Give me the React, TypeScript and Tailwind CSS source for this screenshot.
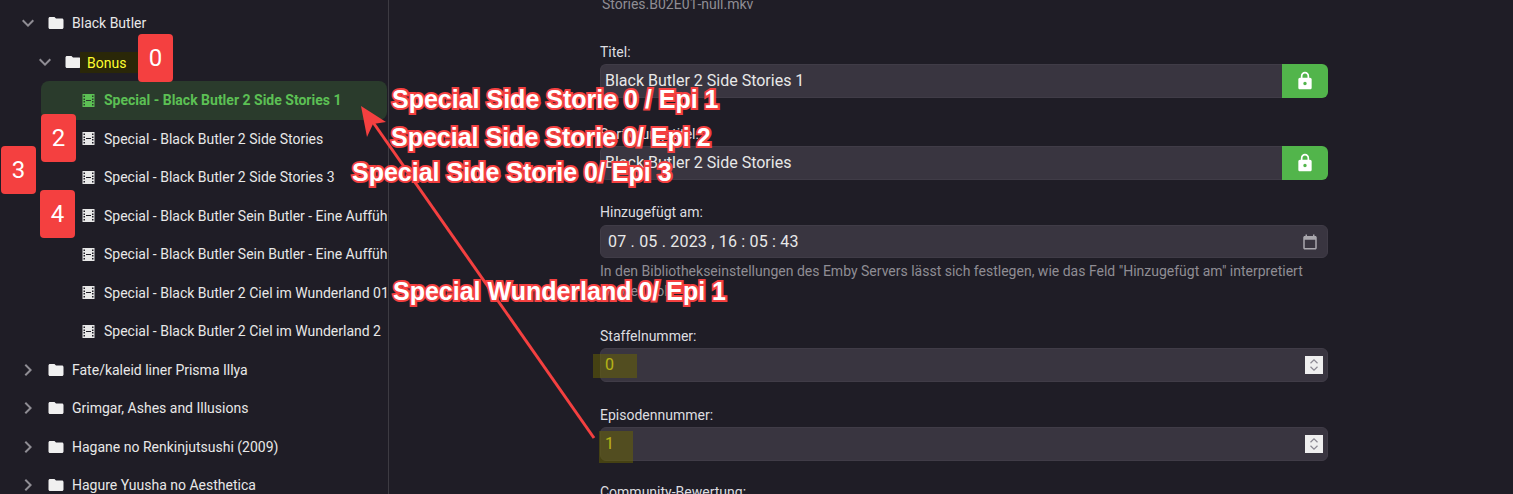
import React from "react";

const FONT = "[font-family:Roboto,'Liberation_Sans',sans-serif]";

function Chevron({ open }: { open: boolean }) {
  return (
    <svg viewBox="0 0 24 24" className="w-6 h-6 shrink-0 text-[#8f8d94]" fill="currentColor">
      {open ? (
        <path d="M7.41 8.59 12 13.17l4.59-4.58L18 10l-6 6-6-6z" />
      ) : (
        <path d="M8.59 16.59 13.17 12 8.59 7.41 10 6l6 6-6 6z" />
      )}
    </svg>
  );
}

function Folder() {
  return (
    <svg viewBox="0 0 24 24" className="w-[18px] h-[18px] shrink-0 text-[#f0f0f0]" fill="currentColor">
      <path d="M10 4H4c-1.1 0-1.99.9-1.99 2L2 18c0 1.1.9 2 2 2h16c1.1 0 2-.9 2-2V8c0-1.1-.9-2-2-2h-8l-2-2z" />
    </svg>
  );
}

function Film() {
  return (
    <svg viewBox="0 0 13 13" className="w-[13px] h-[13px] shrink-0" fill="currentColor">
      <path
        fillRule="evenodd"
        d="M0.5 0H12.5V13H0.5ZM1.5 1.5V3H3V1.5ZM1.5 4.5V6H3V4.5ZM1.5 7V8.5H3V7ZM1.5 10V11.5H3V10ZM10 1.5V3H11.5V1.5ZM10 4.5V6H11.5V4.5ZM10 7V8.5H11.5V7ZM10 10V11.5H11.5V10ZM4 6V7H9V6Z"
      />
    </svg>
  );
}

function Lock() {
  return (
    <svg viewBox="0 0 24 24" className="w-5 h-5" fill="currentColor">
      <path d="M18 8h-1V6c0-2.76-2.24-5-5-5S7 3.240 7 6v2H6c-1.100 0-2 .9-2 2v10c0 1.100.9 2 2 2h12c1.100 0 2-.9 2-2V10c0-1.100-.9-2-2-2zm-6 9c-1.100 0-2-.9-2-2s.9-2 2-2 2 .9 2 2-.9 2-2 2zM9 8V6c0-1.660 1.340-3 3-3s3 1.340 3 3v2H9z" />
    </svg>
  );
}

function FolderRow({ label, open, indent }: { label: string; open: boolean; indent: string }) {
  return (
    <div className={`h-[38.5px] flex items-center whitespace-nowrap ${indent}`}>
      <Chevron open={open} />
      <div className="ml-[7px] mr-[7px] flex items-center">
        <Folder />
      </div>
      <span className="text-sm text-[#e8e8e8]">{label}</span>
    </div>
  );
}

function FileRow({ label, active }: { label: string; active?: boolean }) {
  return (
    <div
      className={`h-[38.5px] ml-[41px] pl-[41px] flex items-center gap-[9px] whitespace-nowrap overflow-hidden rounded-lg ${
        active ? "bg-[#2a3b2c] text-[#5cc054] font-bold" : "text-[#e8e8e8]"
      }`}
    >
      <Film />
      <span className="text-sm">{label}</span>
    </div>
  );
}

function Field({ label, mt, children }: { label: string; mt: string; children: React.ReactNode }) {
  return (
    <div className={mt}>
      <div className="h-5 leading-5 mb-[2px] text-sm text-[#dedde0]">{label}</div>
      {children}
    </div>
  );
}

function LockInput({ value }: { value: string }) {
  return (
    <div className="flex h-[34px]">
      <div className="flex-1 bg-[#393540] border border-[#403c47] border-r-0 rounded-l-md pl-1 flex items-center text-base text-[#e8e8e8]">
        {value}
      </div>
      <div className="w-[46px] bg-[#52b54b] rounded-r-md flex items-center justify-center text-white">
        <Lock />
      </div>
    </div>
  );
}

function NumberInput({ value }: { value: string }) {
  return (
    <div className="h-[34px] bg-[#393540] border border-[#403c47] rounded-md pl-1 pr-1 flex items-center justify-between text-base text-[#ffff2e]">
      <span>{value}</span>
      <div className="w-[18px] h-[18px] bg-[#efefef] flex items-center justify-center">
        <svg viewBox="0 0 18 18" className="w-[18px] h-[18px]" fill="none" stroke="#8b8892" strokeWidth="1.2">
          <path d="M5.500 7.200 9 3.800 12.500 7.200" />
          <path d="M5.500 10.800 9 14.200 12.500 10.800" />
        </svg>
      </div>
    </div>
  );
}

function Square({ n, className }: { n: string; className: string }) {
  return (
    <div
      className={`absolute w-[35px] h-[48px] bg-[#f44040] rounded-sm flex items-center justify-center text-white text-2xl ${className}`}
    >
      {n}
    </div>
  );
}

function Note({ text, className }: { text: string; className: string }) {
  return (
    <div
      className={`absolute whitespace-nowrap font-bold text-white text-[25px] leading-[28px] [font-family:'Liberation_Sans',Arial,sans-serif] [-webkit-text-stroke:4px_#f44040] [paint-order:stroke_fill] ${className}`}
    >
      {text}
    </div>
  );
}

const files = [
  "Special - Black Butler 2 Side Stories",
  "Special - Black Butler 2 Side Stories 3",
  "Special - Black Butler Sein Butler - Eine Aufführung",
  "Special - Black Butler Sein Butler - Eine Aufführung 2",
  "Special - Black Butler 2 Ciel im Wunderland 01",
  "Special - Black Butler 2 Ciel im Wunderland 2",
];

export default function App() {
  return (
    <div className={`relative h-[494px] w-[1513px] overflow-hidden bg-[#1f1d26] flex ${FONT}`}>
      <aside className="w-[389px] shrink-0 h-full overflow-hidden border-r border-[#3d3b42] pt-1 pr-[1px]">
        <FolderRow label="Black Butler" open indent="pl-4" />
        <FolderRow label="Bonus" open indent="pl-[33px]" />
        <FileRow label="Special - Black Butler 2 Side Stories 1" active />
        {files.map((f) => (
          <FileRow key={f} label={f} />
        ))}
        <FolderRow label="Fate/kaleid liner Prisma Illya" open={false} indent="pl-4" />
        <FolderRow label="Grimgar, Ashes and Illusions" open={false} indent="pl-4" />
        <FolderRow label="Hagane no Renkinjutsushi (2009)" open={false} indent="pl-4" />
        <FolderRow label="Hagure Yuusha no Aesthetica" open={false} indent="pl-4" />
      </aside>

      <main className="ml-[211px] w-[728px] shrink-0">
        <div className="-mt-[6px] h-5 leading-5 text-sm text-[#8f8d94] pl-[2px]">Stories.B02E01-null.mkv</div>
        <Field label="Titel:" mt="mt-[28px]">
          <LockInput value="Black Butler 2 Side Stories 1" />
        </Field>
        <Field label="Sortierungstitel:" mt="mt-[26px]">
          <LockInput value="Black Butler 2 Side Stories" />
        </Field>
        <Field label="Hinzugefügt am:" mt="mt-[22px]">
          <div className="mt-[3px] h-[33px] bg-[#393540] border border-[#403c47] rounded-md pl-[7px] pr-2 flex items-center justify-between text-base text-[#e8e8e8]">
            <span className="whitespace-pre tracking-[0.2px]">07 . 05 . 2023 , 16 : 05 : 43</span>
            <svg viewBox="0 0 24 24" className="w-[18px] h-[18px] text-[#a9a7ad]" fill="currentColor">
              <path d="M19 4h-1V2h-2v2H8V2H6v2H5c-1.100 0-2 .9-2 2v14c0 1.100.9 2 2 2h14c1.100 0 2-.9 2-2V6c0-1.100-.9-2-2-2zm0 16H5V9h14v11z" />
            </svg>
          </div>
        </Field>
        <div className="mt-[3px] text-sm leading-[20px] text-[#8f8d94]">
          In den Bibliothekseinstellungen des Emby Servers lässt sich festlegen, wie das Feld "Hinzugefügt am" interpretiert
          werden soll.
        </div>
        <Field label="Staffelnummer:" mt="mt-[25px]">
          <NumberInput value="0" />
        </Field>
        <Field label="Episodennummer:" mt="mt-[23px]">
          <NumberInput value="1" />
        </Field>
        <Field label="Community-Bewertung:" mt="mt-[21px]">
          <div />
        </Field>
      </main>

      {/* annotations lying over the page */}
      <div className="absolute left-[80px] top-[52px] w-[58px] h-[21px] bg-[#2a2708] flex items-center pl-[7px] text-sm text-[#ffff2e]">
        Bonus
      </div>
      <div className="absolute left-[593px] top-[354px] w-[44px] h-[24px] bg-[#6b6600]/50" />
      <div className="absolute left-[599px] top-[431px] w-[34px] h-[32px] bg-[#6b6600]/50" />

      <Square n="0" className="left-[138px] top-[34px]" />
      <Square n="2" className="left-[41px] top-[114px]" />
      <Square n="3" className="left-[1px] top-[146px]" />
      <Square n="4" className="left-[40px] top-[190px]" />

      <svg viewBox="0 0 1513 494" className="absolute inset-0 w-[1513px] h-[494px] pointer-events-none">
        <line x1="594" y1="438" x2="370" y2="118" stroke="#f44040" strokeWidth="3" />
        <path d="M361 106 L386 122 L373 124 L367 137 Z" fill="#f44040" />
      </svg>

      <Note text="Special Side Storie 0 / Epi 1" className="left-[392px] top-[85px]" />
      <Note text="Special Side Storie 0/ Epi 2" className="left-[391px] top-[123px]" />
      <Note text="Special Side Storie 0/ Epi 3" className="left-[352px] top-[158px]" />
      <Note text="Special Wunderland 0/ Epi 1" className="left-[393px] top-[277px]" />
    </div>
  );
}
